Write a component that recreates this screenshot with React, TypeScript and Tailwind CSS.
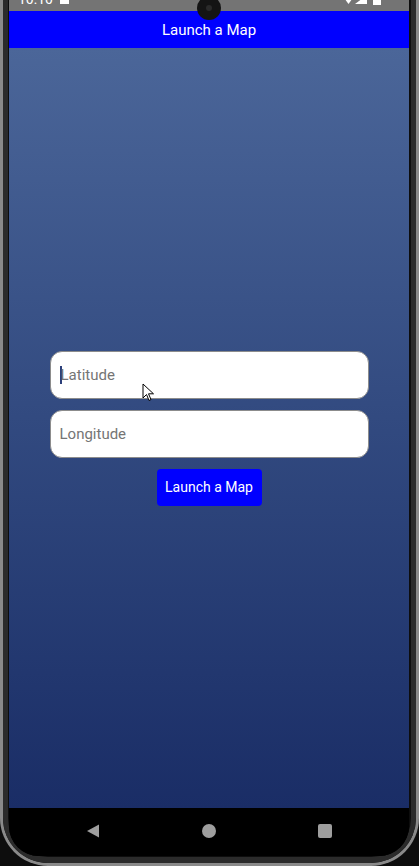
import React from "react";

export default function App() {
  return (
    <div className="relative w-[419px] h-[866px] overflow-hidden bg-[#0d0d0d]" style={{ fontFamily: "Roboto, 'Noto Sans', sans-serif" }}>
      {/* frame outer edges */}
      <div className="absolute inset-0 rounded-b-[48px] border-x-[3px] border-b-[3px] border-[#8a8a8a]" />
      <div className="absolute left-[3px] right-[3px] top-0 bottom-[3px] rounded-b-[45px] border-x-[5px] border-b-[6px] border-[#2b2b2b]" />
      {/* screen */}
      <div className="absolute left-[9px] top-0 w-[400px] h-[856px] rounded-b-[30px] overflow-hidden bg-black flex flex-col">
        {/* status bar */}
        <div className="relative h-[11px] bg-[#747474] overflow-hidden shrink-0">
          <div className="absolute left-[9px] top-[-8px] text-[14px] text-white leading-none">10:10</div>
          <div className="absolute left-[51px] top-[-5px] w-[9px] h-[9px] bg-white" />
          <div className="absolute right-[54px] top-[-5px] w-[13px] h-[9px] bg-white" style={{ clipPath: "polygon(0 0,100% 0,50% 100%)" }} />
          <div className="absolute right-[42px] top-[-5px] w-[12px] h-[9px] bg-white" style={{ clipPath: "polygon(100% 0,100% 100%,0 100%)" }} />
          <div className="absolute right-[28px] top-[-5px] w-[8px] h-[10px] bg-white" />
        </div>
        {/* header */}
        <div className="h-[37px] bg-[#0000ff] flex items-center justify-center text-white text-[15px] shrink-0 pt-[2px]">
          Launch a Map
        </div>
        {/* body */}
        <div className="flex-1 bg-gradient-to-b from-[#4b6699] to-[#1a2d66] flex flex-col items-center justify-center gap-[11px] pt-[1px]">
          <div className="w-[319px] h-[48px] rounded-[12px] bg-white border border-[#8c8c8c] flex items-center pl-[9px] text-[15px] text-[#757575]">
            <span className="w-[2px] h-[18px] bg-[#2c3f7a] mr-[-1px]" />
            <span>Latitude</span>
          </div>
          <div className="w-[319px] h-[48px] rounded-[12px] bg-white border border-[#8c8c8c] flex items-center pl-[9px] text-[15px] text-[#757575]">
            Longitude
          </div>
          <div className="w-[105px] h-[37px] rounded-[4px] bg-[#0000ff] flex items-center justify-center text-white text-[14px]">
            Launch a Map
          </div>
        </div>
        {/* nav bar */}
        <div className="h-[48px] bg-black flex items-center shrink-0 pb-[2px]">
          <div className="w-full flex items-center justify-between px-[77px]">
            <svg width="14" height="14" viewBox="0 0 14 14"><path d="M1 7 L13 0.5 L13 13.5 Z" fill="#9e9e9e" /></svg>
            <div className="w-[14px] h-[14px] rounded-full bg-[#9e9e9e]" />
            <div className="w-[14px] h-[14px] rounded-[2px] bg-[#9e9e9e]" />
          </div>
        </div>
      </div>
      {/* camera */}
      <div className="absolute left-[197px] top-[-4px] w-[24px] h-[24px] rounded-full bg-[#141414] flex items-center justify-center">
        <div className="w-[6px] h-[6px] rounded-full bg-[#2a2a2a]" />
      </div>
      {/* mouse cursor */}
      <svg className="absolute left-[142px] top-[383px]" width="13" height="20" viewBox="0 0 13 20">
        <path d="M1 1 L1 15 L4.5 11.5 L7 17.5 L9 16.5 L6.5 10.8 L11.5 10.8 Z" fill="white" stroke="black" strokeWidth="1" strokeLinejoin="round" />
      </svg>
    </div>
  );
}
